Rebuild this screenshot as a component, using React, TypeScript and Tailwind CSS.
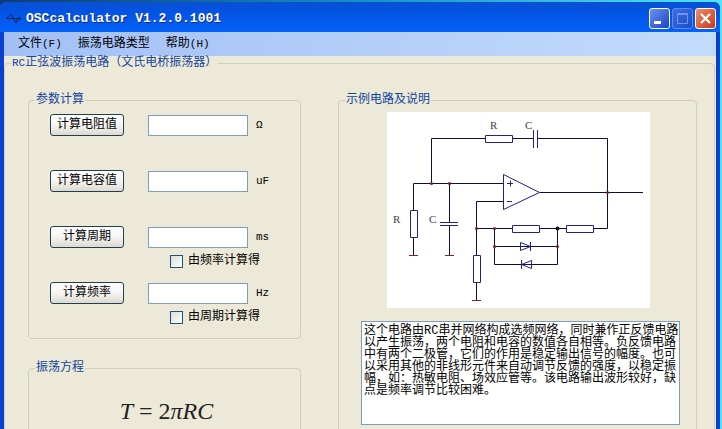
import type { ReactNode } from "react"

const description =
  "这个电路由RC串并网络构成选频网络，同时兼作正反馈电路以产生振荡，两个电阻和电容的数值各自相等。负反馈电路中有两个二极管，它们的作用是稳定输出信号的幅度。也可以采用其他的非线形元件来自动调节反馈的强度，以稳定振幅，如：热敏电阻、场效应管等。该电路输出波形较好，缺点是频率调节比较困难。"

const rows = [
  { id: "resistance", action: "计算电阻值", unit: "Ω" },
  { id: "capacitance", action: "计算电容值", unit: "uF" },
  { id: "period", action: "计算周期", unit: "ms", option: "由频率计算得" },
  { id: "frequency", action: "计算频率", unit: "Hz", option: "由周期计算得" },
]

function Latin({ children }: { children: ReactNode }) {
  return <span className="text-[11px] leading-none">{children}</span>
}

function WaveIcon() {
  return (
    <svg className="w-4 h-4 shrink-0" viewBox="0 0 16 16" fill="none" stroke="#0a2058" aria-hidden="true">
      <path d="M0 7.5H15M13 5.5L15 7.5L13 9.5" />
      <path d="M1 7L5 3L10 12L12 8" />
    </svg>
  )
}

function TitleBar() {
  return (
    <header className="flex items-center shrink-0 h-[30px] pt-[3px] pl-[6px] pr-1 rounded-t-md bg-linear-to-b from-[#0a4fd0] via-[#0353e2] via-30% to-[#0561fa]">
      <WaveIcon />
      <h1 className="flex-1 pl-1 text-[13px] leading-4 font-bold text-white [text-shadow:1px_1px_#0a2a80]">
        OSCcalculator V1.2.0.1001
      </h1>
      <div className="flex gap-[2px]">
        <button aria-label="最小化" className="size-[21px] rounded-[3px] border border-white bg-linear-to-br from-[#6d92ee] to-[#1941c4]">
          <svg viewBox="0 0 19 19" aria-hidden="true">
            <path d="M4 12H11V15H4Z" fill="white" />
          </svg>
        </button>
        <button aria-label="最大化" disabled className="size-[21px] rounded-[3px] border border-[#5e8af0] bg-linear-to-br from-[#3f6de0] to-[#1c4bcb]">
          <svg viewBox="0 0 19 19" fill="none" stroke="#6f97f2" aria-hidden="true">
            <path d="M4.500 5.500H14.500V14.500H4.500ZM4 4.500H15" />
          </svg>
        </button>
        <button aria-label="关闭" className="size-[21px] rounded-[3px] border border-white bg-linear-to-br from-[#ec8a6c] to-[#c9340c]">
          <svg viewBox="0 0 19 19" fill="none" stroke="white" strokeWidth="2.200" aria-hidden="true">
            <path d="M5 5L14 14M14 5L5 14" />
          </svg>
        </button>
      </div>
    </header>
  )
}

function MenuBar() {
  return (
    <nav className="flex items-center shrink-0 gap-4 h-6 pl-[14px] bg-linear-to-r from-[#a3c0f6] to-[#c3dbfb] text-black">
      <button>文件<Latin>(F)</Latin></button>
      <button>振荡电路类型</button>
      <button>帮助<Latin>(H)</Latin></button>
    </nav>
  )
}

function Group({ title, className, children }: { title: ReactNode; className?: string; children: ReactNode }) {
  return (
    <fieldset className={`min-w-0 rounded border border-[#d0cfbb] ${className}`}>
      <legend className="ml-[6px] px-px h-[14px] leading-[14px] text-[#12459e]">{title}</legend>
      {children}
    </fieldset>
  )
}

function Calculator() {
  return (
    <Group title="参数计算" className="pt-[7px]">
      {rows.map((row) => (
        <div key={row.id} className="h-14 pl-[21px]">
          <div className="flex items-center">
            <button className="w-[74px] h-[22px] rounded-[3px] border border-[#1c405c] bg-linear-to-b from-white via-[#f6f5f1] to-[#dcd9cd] text-black">
              {row.action}
            </button>
            <input id={row.id} type="text" className="w-25 h-[21px] ml-6 border border-[#7f9db9] bg-white px-1 outline-none" />
            <label htmlFor={row.id} className="ml-2 text-[11px] text-black">{row.unit}</label>
          </div>
          {row.option && (
            <label className="flex items-center gap-[5px] h-4 mt-[5px] ml-[120px] text-black">
              <input type="checkbox" className="appearance-none size-[13px] border border-[#1c5180] bg-linear-to-br from-[#dcdcd7] to-white" />
              {row.option}
            </label>
          )}
        </div>
      ))}
    </Group>
  )
}

function Circuit() {
  return (
    <svg className="w-[263px] h-[196px] ml-[26px] bg-white" viewBox="0 0 263 196" fill="none" role="img" aria-label="示例电路">
      {/* wires */}
      <path
        stroke="#0c0c48"
        d="M98 26.500H44.500V71.500M126 26.500H146M151 26.500H220.500V116.500H207M26.500 98V71.500H116M62.500 71.500V110M62.500 114V143M26.500 126V143M116 89.500H89.500V143M89.500 171V188M89.500 116.500H125M153 116.500H179M107.500 116.500V152.500H170.500V116.500M107.500 134.500H170.500M153 80.500H256"
      />
      {/* resistors, capacitors and the amplifier */}
      <g stroke="#22228c">
        <path fill="white" d="M98.500 23.500H125.500V30.500H98.500ZM23.500 98.500H30.500V125.500H23.500ZM86.500 143.500H93.500V170.500H86.500ZM125.500 113.500H152.500V120.500H125.500ZM179.500 113.500H206.500V120.500H179.500Z" />
        <path d="M146.500 18V36M150.500 18V36M53 110.500H71M53 113.500H71" />
        <path d="M116.500 62.500V97.500L152.500 80.500ZM120 71.500H126M123.500 68.500V74.500M120 89.500H125" />
        <path d="M133.500 130.500V138.500L143.500 134.500ZM143.500 130V139M144.500 148.500V156.500L134.500 152.500ZM134.500 148V157" />
      </g>
      {/* ground */}
      <path stroke="#8c2020" d="M22 143.500H31M58 143.500H67M85 188.500H94" />
      <g fill="#801818">
        <circle cx="44.500" cy="71.500" r="1.500" />
        <circle cx="62.500" cy="71.500" r="1.500" />
        <circle cx="89.500" cy="116.500" r="1.500" />
        <circle cx="107.500" cy="116.500" r="1.500" />
        <circle cx="107.500" cy="134.500" r="1.500" />
        <circle cx="170.500" cy="134.500" r="1.500" />
        <circle cx="220.500" cy="80.500" r="1.500" />
        <circle cx="170.500" cy="116.500" r="2" fill="#101010" />
      </g>
      <g className="font-['Liberation_Serif',serif] text-[11px]" fill="#444">
        <text x="103" y="17">R</text>
        <text x="138" y="17">C</text>
        <text x="6" y="111">R</text>
        <text x="42" y="111">C</text>
      </g>
    </svg>
  )
}

export default function App() {
  return (
    <div className="h-screen overflow-hidden pt-[2px] pr-[2px] bg-linear-to-r from-[#0c3c78] via-[#1590c8] to-[#4fe4f8] font-['Liberation_Mono','Noto_Sans_CJK_SC',monospace] text-xs">
      <div className="flex flex-col h-full rounded-t-md bg-[#0a3fcf]">
        <TitleBar />
        <main className="flex flex-col flex-1 min-h-0 mx-1 bg-[#ece9d8]">
          <MenuBar />
          <Group title={<><Latin>RC</Latin>正弦波振荡电路（文氏电桥振荡器）</>} className="shrink-0 h-[520px] mr-px">
            <div className="flex gap-[37px] h-full pt-[23px] pl-[23px] pr-[17px]">
              <div className="flex flex-col gap-[22px] w-[273px] shrink-0">
                <Calculator />
                <Group title="振荡方程" className="h-32">
                  <p className="pt-[22px] pl-1 text-center font-['Liberation_Serif',serif] text-2xl leading-7 text-[#222]">
                    <i>T</i> = 2<i>πRC</i>
                  </p>
                </Group>
              </div>
              <Group title="示例电路及说明" className="flex-1">
                <div className="flex flex-col gap-[13px] pt-[5px] pl-[22px] pr-4">
                  <Circuit />
                  <textarea
                    readOnly
                    aria-label="电路说明"
                    value={description}
                    className="w-full h-[104px] resize-none overflow-hidden border border-[#7f9db9] bg-white pl-[2px] pt-[3px] leading-3 text-black outline-none"
                  />
                </div>
              </Group>
            </div>
          </Group>
        </main>
      </div>
    </div>
  )
}
